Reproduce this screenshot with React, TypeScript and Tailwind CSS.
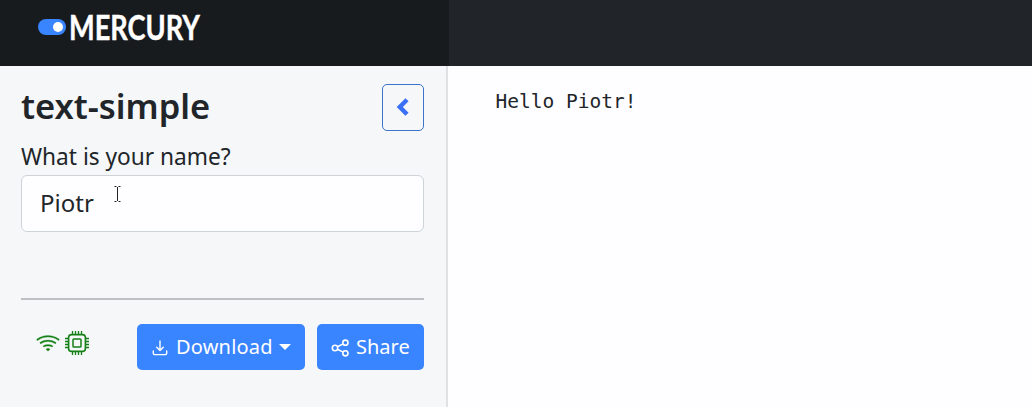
import { BsWifi } from "react-icons/bs";

function Logo() {
  return (
    <div className="flex h-[66px] w-[449px] shrink-0 items-start bg-[#181b1e] pl-[38px] pt-[7px]">
      <span className="mt-[12px] flex h-[16px] w-[28px] shrink-0 items-center justify-end rounded-full bg-[#3984ff] pr-[3px]">
        <span className="size-[10px] rounded-full bg-white" />
      </span>
      <span className="ml-[3px] origin-left scale-x-[0.8] whitespace-nowrap font-['Lato'] text-[34px] font-bold leading-[40px] text-white [-webkit-text-stroke:0.4px_white]">
        MERCURY
      </span>
    </div>
  );
}

function ChevronIcon() {
  return (
    <svg width="14" height="20" viewBox="0 0 14 20" fill="none">
      <path d="M11 1.8 3.8 9 11 16.2" stroke="currentColor" strokeWidth="4.4" />
    </svg>
  );
}

function CpuIcon() {
  return (
    <svg width="24" height="24" viewBox="0 0 24 24" fill="none" stroke="currentColor">
      <rect x="3.6" y="3.6" width="16.8" height="16.8" rx="3" strokeWidth="1.6" />
      <rect x="8" y="8" width="8" height="8" rx="0.8" strokeWidth="1.5" />
      <path
        d="M7.5 0v3.5M10.5 0v3.5M13.5 0v3.5M16.5 0v3.5M7.5 20.5V24M10.5 20.5V24M13.5 20.5V24M16.5 20.5V24M0 7.5h3.5M0 10.5h3.5M0 13.5h3.5M0 16.5h3.5M20.5 7.5H24M20.5 10.5H24M20.5 13.5H24M20.5 16.5H24"
        strokeWidth="1.3"
      />
    </svg>
  );
}

function DownloadIcon() {
  return (
    <svg className="mt-[2px] shrink-0" width="16" height="16" viewBox="0 0 16 16" fill="none" stroke="currentColor" strokeWidth="1.4" strokeLinecap="round" strokeLinejoin="round">
      <path d="M8 1v9.5M4.7 7.3 8 10.6l3.3-3.3M1.3 11v2.2a1.4 1.4 0 0 0 1.4 1.4h10.6a1.4 1.4 0 0 0 1.4-1.4V11" />
    </svg>
  );
}

function ShareIcon() {
  return (
    <svg className="mt-[2px] shrink-0" width="18" height="18" viewBox="0 0 18 18" fill="none" stroke="currentColor" strokeWidth="1.6">
      <circle cx="4" cy="9" r="2.7" />
      <circle cx="14.4" cy="3.7" r="2.6" />
      <circle cx="14.4" cy="14.3" r="2.6" />
      <path d="m6.4 7.8 5.7-2.9M6.4 10.2l5.7 2.9" />
    </svg>
  );
}

function TextCursor() {
  return (
    <svg className="absolute left-[91px] top-[9px]" width="9" height="19" viewBox="0 0 9 19" fill="none">
      <path d="M1 1.5h2.5l1 1 1-1H8M4.5 2v14M1 16.5h2.5l1-1 1 1H8" stroke="#fff" strokeWidth="3" />
      <path d="M1.5 1.5h2M5.5 1.5h2M4.5 2v14M1.5 16.5h2M5.5 16.5h2" stroke="#222" />
    </svg>
  );
}

export default function App() {
  return (
    <div className="flex h-[407px] w-[1032px] flex-col overflow-hidden bg-[#fefdff] font-['Noto_Sans',sans-serif] text-[#212529]">
      <header className="flex h-[66px] shrink-0 bg-[#212529]">
        <Logo />
      </header>
      <div className="flex min-h-0 flex-1">
        <aside className="flex w-[448px] shrink-0 flex-col border-r-2 border-[#dfe1e3] bg-[#f5f7f9] pl-[21px] pr-[22px] pt-[18px]">
          <div className="flex h-[47px] items-start justify-between">
            <h1 className="origin-left scale-x-[0.985] whitespace-nowrap text-[35px] font-semibold leading-[44px]">text-simple</h1>
            <button className="flex h-[47px] w-[42px] items-center justify-center rounded-[5px] border border-[#3b73cd] text-[#3970f5]">
              <ChevronIcon />
            </button>
          </div>
          <label className="mt-[8px] h-[36px] origin-left scale-x-[0.945] whitespace-nowrap text-[24px] leading-[33px]">What is your name?</label>
          <div className="relative flex h-[57px] items-center rounded-[6px] border border-[#ced3d8] bg-[#fefdff] pb-[2px] pl-[18px] text-[24px]">
            <span>Piotr</span>
            <TextCursor />
          </div>
          <hr className="mt-[66px] h-[2px] border-0 bg-[#bec0c3]" />
          <div className="mt-[24px] flex h-[46px] items-start">
            <div className="flex w-[116px] shrink-0 gap-[5px] pl-[15px] pt-[7px] text-[#168016]">
              <BsWifi size={24} stroke="currentColor" strokeWidth={0.2} />
              <CpuIcon />
            </div>
            <button className="flex h-[46px] w-[168px] shrink-0 items-center rounded-[5px] bg-[#3984ff] pl-[15px] text-[20px] text-white">
              <DownloadIcon />
              <span className="ml-[8px] tracking-[0.2px]">Download</span>
              <span className="ml-[6px] border-x-[6px] border-t-[6px] border-x-transparent border-t-white" />
            </button>
            <button className="ml-[12px] flex h-[46px] w-[107px] shrink-0 items-center rounded-[5px] bg-[#3984ff] pl-[14px] text-[20px] text-white">
              <ShareIcon />
              <span className="ml-[7px]">Share</span>
            </button>
          </div>
        </aside>
        <main className="flex-1 pl-[47.5px] pt-[22px]">
          <pre className="font-['DejaVu_Sans_Mono',monospace] text-[19.5px] leading-[27px]">Hello Piotr!</pre>
        </main>
      </div>
    </div>
  );
}
